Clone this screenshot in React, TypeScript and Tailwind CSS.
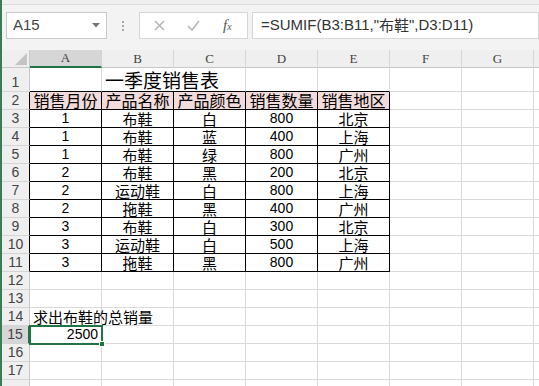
import React from "react";

const CJK = '"Noto Sans CJK SC", "Liberation Sans", sans-serif';
const NUM = '"Liberation Sans", "Noto Sans CJK SC", sans-serif';

const cols = ["A", "B", "C", "D", "E", "F", "G", ""];

const data: string[][] = [
  ["1", "布鞋", "白", "800", "北京"],
  ["1", "布鞋", "蓝", "400", "上海"],
  ["1", "布鞋", "绿", "800", "广州"],
  ["2", "布鞋", "黑", "200", "北京"],
  ["2", "运动鞋", "白", "800", "上海"],
  ["2", "拖鞋", "黑", "400", "广州"],
  ["3", "布鞋", "白", "300", "北京"],
  ["3", "运动鞋", "白", "500", "上海"],
  ["3", "拖鞋", "黑", "800", "广州"],
];

const headers = ["销售月份", "产品名称", "产品颜色", "销售数量", "销售地区"];

function isNum(s: string) {
  return /^[0-9]+$/.test(s);
}

function RowHeader({ n, black, selected, h }: { n: number; black?: boolean; selected?: boolean; h: string }) {
  return (
    <div
      className={`${h} w-[28px] shrink-0 flex items-end justify-center pb-[1px] text-[14px] leading-[16px] text-[#444] border-b border-b-[#d5d5d5] ${
        selected ? "bg-[#d6d6d6] border-r-2 border-r-[#217346]" : "bg-[#efefef] border-r"
      } ${!selected ? (black ? "border-r-black" : "border-r-[#c8c8c8]") : ""}`}
      style={{ fontFamily: NUM }}
    >
      {n}
    </div>
  );
}

function GridRow({ n, children, h = "h-[18px]" }: { n: number; children?: React.ReactNode; h?: string }) {
  return (
    <div className={`flex ${h} shrink-0`}>
      <RowHeader n={n} h={h} black={n >= 2 && n <= 11} selected={n === 15} />
      {children}
    </div>
  );
}

function Cell({
  children,
  black,
  pink,
  align = "center",
  size = "text-[15px]",
  font = CJK,
  blackBottom,
}: {
  children?: React.ReactNode;
  black?: boolean;
  pink?: boolean;
  align?: "center" | "left" | "right";
  size?: string;
  font?: string;
  blackBottom?: boolean;
}) {
  const al = align === "center" ? "justify-center" : align === "left" ? "justify-start pl-[3px]" : "justify-end pr-[3px]";
  return (
    <div
      className={`w-[72px] shrink-0 flex items-center ${al} ${size} leading-[17px] text-black whitespace-nowrap overflow-visible border-r border-b ${
        black ? "border-black" : blackBottom ? "border-r-[#dadada] border-b-black" : "border-[#dadada]"
      } ${pink ? "bg-[#f2dcdb]" : ""}`}
      style={{ fontFamily: font }}
    >
      {children}
    </div>
  );
}

function EmptyCells({ from = 0 }: { from?: number }) {
  return (
    <>
      {cols.slice(from).map((c, i) => (
        <Cell key={i} />
      ))}
    </>
  );
}

export default function App() {
  return (
    <div className="w-[539px] h-[386px] overflow-hidden bg-white border-l-2 border-[#3f7a55] flex flex-col">
      {/* Formula bar area */}
      <div className="h-[50px] shrink-0 bg-[#f3f3f3] flex flex-col">
        <div className="h-[5px] border-b border-[#dcdcdc] bg-[#f0f0f0]" />
        <div className="mt-[7px] flex items-stretch h-[27px]">
          <div className="ml-[4px] w-[101px] bg-white border border-[#c9c9c9] flex items-center justify-between pl-[6px] pr-[6px]">
            <span className="text-[15px] text-[#444]" style={{ fontFamily: NUM }}>
              A15
            </span>
            <svg width="8" height="5" viewBox="0 0 8 5">
              <path d="M0 0 L8 0 L4 4.5 Z" fill="#777" />
            </svg>
          </div>
          <div className="w-[32px] flex flex-col items-center justify-center gap-[2px]">
            <span className="w-[2px] h-[2px] bg-[#a8a8a8]" />
            <span className="w-[2px] h-[2px] bg-[#a8a8a8]" />
            <span className="w-[2px] h-[2px] bg-[#a8a8a8]" />
          </div>
          <div className="w-[109px] bg-white border border-[#d6d6d6] flex items-center">
            <svg className="ml-[14px]" width="11" height="11" viewBox="0 0 11 11">
              <path d="M1 1 L10 10 M10 1 L1 10" stroke="#b5b5b5" strokeWidth="1.5" />
            </svg>
            <svg className="ml-[22px]" width="13" height="11" viewBox="0 0 13 11">
              <path d="M1 6 L5 10 L12 1" stroke="#b5b5b5" strokeWidth="1.6" fill="none" />
            </svg>
            <span
              className="ml-[23px] text-[15px] italic text-[#555] leading-none"
              style={{ fontFamily: '"Liberation Serif", serif' }}
            >
              f<span className="text-[10px]">x</span>
            </span>
          </div>
          <div
            className="ml-[4px] flex-1 bg-white border border-[#d6d6d6] flex items-center pl-[8px] text-[15px] text-[#333] whitespace-nowrap"
            style={{ fontFamily: NUM }}
          >
            =SUMIF(B3:B11,"<span style={{ fontFamily: CJK }}>布鞋</span>",D3:D11)
          </div>
        </div>
      </div>

      {/* Sheet */}
      <div className="relative flex-1 flex flex-col">
        {/* Column headers */}
        <div className="flex h-[18px] shrink-0">
          <div className="w-[28px] shrink-0 bg-[#efefef] border-r border-b border-[#c8c8c8] flex items-end justify-end pr-[2px] pb-[2px]">
            <svg width="12" height="12" viewBox="0 0 12 12">
              <path d="M12 0 L12 12 L0 12 Z" fill="#c4c4c4" />
            </svg>
          </div>
          {cols.map((c, i) => (
            <div
              key={i}
              className={`w-[72px] shrink-0 flex items-center justify-center text-[13px] text-[#444] border-r border-[#d5d5d5] ${
                i === 0 ? "bg-[#d6d6d6] border-b-2 border-b-[#217346]" : "bg-[#efefef] border-b border-b-[#c8c8c8]"
              }`}
              style={{ fontFamily: '"Liberation Serif", serif' }}
            >
              {c}
            </div>
          ))}
        </div>

        {/* Row 1 */}
        <GridRow n={1} h="h-[24px]">
          <Cell blackBottom />
          <div className="w-[72px] shrink-0 relative flex items-center border-b border-b-black">
            <span className="absolute left-[3px] top-[1px] text-[19px] leading-[22px] whitespace-nowrap" style={{ fontFamily: CJK }}>
              一季度销售表
            </span>
          </div>
          <div className="w-[72px] shrink-0 border-b border-b-black border-r border-r-[#dadada]" />
          <Cell blackBottom />
          <Cell blackBottom />
          <EmptyCells from={5} />
        </GridRow>

        {/* Row 2 headers */}
        <GridRow n={2}>
          {headers.map((h) => (
            <Cell key={h} black pink size="text-[16px]">
              {h}
            </Cell>
          ))}
          <EmptyCells from={5} />
        </GridRow>

        {data.map((r, i) => (
          <GridRow key={i} n={i + 3}>
            {r.map((v, j) => (
              <Cell key={j} black font={isNum(v) ? NUM : CJK} size={isNum(v) ? "text-[14px]" : "text-[15px]"}>
                {v}
              </Cell>
            ))}
            <EmptyCells from={5} />
          </GridRow>
        ))}

        <GridRow n={12}>
          <EmptyCells />
        </GridRow>
        <GridRow n={13}>
          <EmptyCells />
        </GridRow>
        <GridRow n={14}>
          <div className="w-[72px] shrink-0 relative border-r border-b border-[#dadada]">
            <span className="absolute left-[3px] top-0 text-[15px] leading-[17px] whitespace-nowrap" style={{ fontFamily: CJK }}>
              求出布鞋的总销量
            </span>
          </div>
          <div className="w-[72px] shrink-0 border-b border-[#dadada] border-r" />
          <EmptyCells from={2} />
        </GridRow>
        <GridRow n={15}>
          <Cell align="right" size="text-[14px]" font={NUM}>
            2500
          </Cell>
          <EmptyCells from={1} />
        </GridRow>
        <GridRow n={16}>
          <EmptyCells />
        </GridRow>
        <GridRow n={17}>
          <EmptyCells />
        </GridRow>
        <div className="flex h-[18px] shrink-0">
          <div className="w-[28px] shrink-0 bg-[#efefef] border-r border-[#c8c8c8]" />
          <EmptyCells />
        </div>

        {/* Selection box for A15 */}
        <div className="absolute left-[27px] top-[275px] w-[74px] h-[20px] border-2 border-[#217346] pointer-events-none" />
        <div className="absolute left-[97px] top-[291px] w-[6px] h-[6px] bg-[#217346] border border-white pointer-events-none" />
      </div>
    </div>
  );
}
